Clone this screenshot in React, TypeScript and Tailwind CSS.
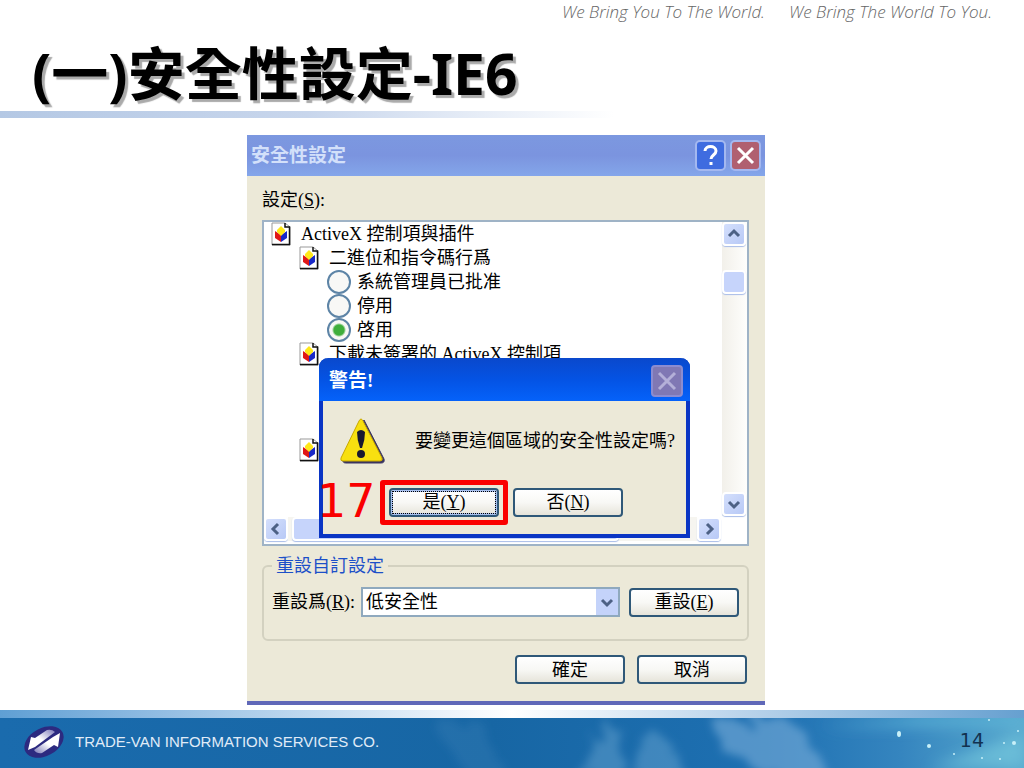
import { useId, type ReactNode } from "react";

const UI_FONT =
  "font-['Liberation_Serif','Noto_Sans_CJK_TC',sans-serif] text-[18px] leading-6 text-black";

export default function App() {
  return (
    <div className="flex min-h-screen flex-col overflow-hidden bg-white">
      <header>
        <p className="flex h-6 items-center justify-end gap-6 pr-8 font-['Open_Sans',sans-serif] text-[17px] font-light text-[#666] italic">
          <span>We Bring You To The World.</span>
          <span>We Bring The World To You.</span>
        </p>
        <h1 className="h-[87px] pt-3 pl-8 font-['Noto_Sans','Noto_Sans_CJK_TC',sans-serif] text-[57px] leading-[74px] font-bold whitespace-nowrap text-black [text-shadow:3px_3px_1px_#aaa]">
          (一)安全性設定-IE6
        </h1>
        <div className="h-[7px] w-3/5 bg-gradient-to-r from-[#b4c8e4] via-[#c8d6ec] to-white" />
      </header>

      <main className="flex flex-1 flex-col items-center pt-[17px]">
        <SettingsDialog />
      </main>

      <Footer />
    </div>
  );
}

function SettingsDialog() {
  return (
    <section
      className={`relative ml-[-12px] flex w-[518px] flex-col border-b-4 border-[#6068b8] bg-[#ece9d8] ${UI_FONT}`}
    >
      <div className="flex h-[41px] items-center justify-between bg-gradient-to-b from-[#7c98e0] via-[#7b94df] to-[#84a6ea] pr-1 pl-1">
        <h2 className="text-[19px] font-bold text-[#d3e0fa]">安全性設定</h2>
        <div className="flex gap-1">
          <TitleButton label="說明" tone="bg-[#3f6ce0]">
            <path d="M9 10c0-6 11-6 11 0c0 4-5 4-5 8M15 21v3" />
          </TitleButton>
          <TitleButton label="關閉" tone="bg-[#b06070]">
            <path d="M7 7l15 15M22 7l-15 15" />
          </TitleButton>
        </div>
      </div>

      <div className="pt-3 pr-4 pl-[15px]">
        <div className="pb-2">
          設定(<u>S</u>):
        </div>
        <SettingsList />
        <ResetGroup />
        <div className="flex justify-end gap-3 pt-[14px] pr-[2px] pb-[17px]">
          <XpButton>確定</XpButton>
          <XpButton>取消</XpButton>
        </div>
      </div>

      <WarningDialog />
    </section>
  );
}

function SettingsList() {
  return (
    <div className="flex h-[326px] flex-col border-2 border-[#9fb3c6] bg-white">
      <div className="flex min-h-0 flex-1">
        <div className="min-w-0 flex-1 overflow-hidden pl-[7px]">
          <Heading level="pl-0">ActiveX 控制項與插件</Heading>
          <Heading level="pl-7">二進位和指令碼行爲</Heading>
          <Choice>系統管理員已批准</Choice>
          <Choice>停用</Choice>
          <Choice checked>啓用</Choice>
          <Heading level="pl-7">下載未簽署的 ActiveX 控制項</Heading>
          <div className="h-[72px]" />
          <Heading level="pl-7" />
        </div>
        <div className="flex w-[25px] flex-col justify-between bg-gradient-to-r from-[#f2f0ea] to-[#fefefc] pr-px">
          <div className="flex flex-col gap-6">
            <ScrollButton label="向上捲動" d="M7 14l5-5l5 5" />
            <div className="h-6 w-6 rounded border-2 border-white bg-[#c6d4fb] shadow-[0_1px_1px_#a8bce8]" />
          </div>
          <ScrollButton label="向下捲動" d="M7 10l5 5l5-5" />
        </div>
      </div>
      <div className="flex h-[28px] items-center pr-[26px] pb-[2px]">
        <ScrollButton label="向左捲動" d="M14 7l-5 5l5 5" />
        <div className="flex flex-1 bg-[#f6f5f0]">
          <div className="ml-1 h-6 w-4/5 rounded border-2 border-white bg-[#c6d4fb] shadow-[0_1px_1px_#a8bce8]" />
        </div>
        <ScrollButton label="向右捲動" d="M10 7l5 5l-5 5" />
      </div>
    </div>
  );
}

function Heading({ level, children }: { level: string; children?: ReactNode }) {
  return (
    <div className={`flex h-6 items-center gap-2.5 whitespace-nowrap ${level}`}>
      <CubeIcon />
      <span>{children}</span>
    </div>
  );
}

function Choice({ checked, children }: { checked?: boolean; children: ReactNode }) {
  return (
    <label className="flex h-6 items-center gap-1.5 pl-14 whitespace-nowrap">
      <input
        type="radio"
        name="binary-behavior"
        defaultChecked={checked}
        className="size-6 appearance-none rounded-full border-2 border-[#5d84a6] bg-[#f8f8f6] checked:bg-[radial-gradient(circle,#3fae3c_0_5px,#f8f8f6_7px)]"
      />
      {children}
    </label>
  );
}

function CubeIcon() {
  return (
    <svg viewBox="0 0 20 24" className="h-6 w-5 shrink-0">
      <path d="M1 1h13l5 4v18H1z" fill="#fff" stroke="#999" />
      <path d="M14 1v4h4.500v17.500H1" fill="none" stroke="#111" strokeWidth="1.500" />
      <path d="M4 9l6 4v7l-6-4z" fill="#e01818" />
      <path d="M16 9l-6 4v7l6-4z" fill="#1828c8" />
      <path d="M10 4l4 4v2l-4 4l-4-4V8z" fill="#ffe818" />
    </svg>
  );
}

function ScrollButton({ label, d }: { label: string; d: string }) {
  return (
    <button
      type="button"
      aria-label={label}
      className="size-6 shrink-0 rounded border-2 border-white bg-gradient-to-br from-[#d4dffc] to-[#b8c9f6] shadow-[0_1px_1px_#a8bce8]"
    >
      <svg viewBox="2 2 20 20" className="size-5" fill="none" stroke="#4d6185" strokeWidth="3">
        <path d={d} />
      </svg>
    </button>
  );
}

function TitleButton({
  label,
  tone,
  children,
}: {
  label: string;
  tone: string;
  children: ReactNode;
}) {
  return (
    <button
      type="button"
      aria-label={label}
      className={`size-[31px] rounded-[5px] border-2 border-[#a4b8f0] ${tone}`}
    >
      <svg viewBox="1 1 27 27" className="size-[27px]" fill="none" stroke="#fff" strokeWidth="3">
        {children}
      </svg>
    </button>
  );
}

function XpButton({ focused, children }: { focused?: boolean; children: ReactNode }) {
  return (
    <button
      type="button"
      className={`h-[29px] w-[110px] rounded-[4px] border-2 border-[#2f5878] bg-gradient-to-b from-white via-[#f8f8f5] to-[#e6e4da] leading-5 ${
        focused
          ? "shadow-[inset_0_0_0_2px_#a8c0ee] outline-1 -outline-offset-4 outline-dotted outline-black"
          : ""
      }`}
    >
      {children}
    </button>
  );
}

function ResetGroup() {
  const id = useId();
  return (
    <fieldset className="mt-2 h-[87px] rounded-[6px] border-2 border-[#d3d1c0] px-2">
      <legend className="px-1 text-[#1c50c8]">重設自訂設定</legend>
      <div className="flex items-center pt-[9px]">
        <label htmlFor={id} className="w-[89px] whitespace-nowrap">
          重設爲(<u>R</u>):
        </label>
        <div className="relative mr-[9px] flex-1">
          <select
            id={id}
            className="block h-[30px] w-full appearance-none border-2 border-[#8fa9be] bg-white pl-[3px] leading-6"
          >
            <option>低安全性</option>
          </select>
          <svg
            viewBox="0 0 22 26"
            className="pointer-events-none absolute top-[2px] right-[2px] h-[26px] w-[22px] bg-[#c4d3fa]"
            fill="none"
            stroke="#4d6185"
            strokeWidth="3"
          >
            <path d="M6 11l5 5l5-5" />
          </svg>
        </div>
        <XpButton>
          重設(<u>E</u>)
        </XpButton>
      </div>
    </fieldset>
  );
}

function WarningDialog() {
  return (
    <div
      role="alertdialog"
      aria-labelledby="warning-title"
      className="absolute top-[223px] left-[72px] w-[371px] rounded-t-[9px] border-4 border-t-0 border-[#0a35c4] bg-[#ece9d8]"
    >
      <div className="-mx-1 flex h-[43px] items-center justify-between rounded-t-[9px] bg-gradient-to-b from-[#0a48cc] via-[#0453e4] to-[#0562fa] pt-[2px] pr-[7px] pl-[10px]">
        <h3 id="warning-title" className="text-[19px] font-bold text-white">
          警告!
        </h3>
        <button
          type="button"
          aria-label="關閉"
          className="size-8 rounded-[4px] border-2 border-[#8c8cd0] bg-[#8078b4]"
        >
          <svg viewBox="0 0 28 28" className="size-7" fill="none" stroke="#b4b0d8" strokeWidth="3">
            <path d="M6 6l16 16M22 6l-16 16" />
          </svg>
        </button>
      </div>
      <div className="flex h-[75px] items-center gap-7 pt-1 pl-4">
        <WarningIcon />
        <p className="whitespace-nowrap">要變更這個區域的安全性設定嗎?</p>
      </div>
      <div className="flex h-[58px] items-center pb-[6px] pl-[57px]">
        <div className="mr-[5px] rounded-[3px] border-[5px] border-[#fa0000] px-1 py-[3px]">
          <XpButton focused>
            是(<u>Y</u>)
          </XpButton>
        </div>
        <XpButton>
          否(<u>N</u>)
        </XpButton>
      </div>
      {/* Step number laid over the dialog's left edge */}
      <span className="absolute bottom-1.5 -left-1.5 font-['DejaVu_Sans',sans-serif] text-[46px] leading-[54px] text-[#fa0000]">
        17
      </span>
    </div>
  );
}

function WarningIcon() {
  return (
    <svg viewBox="0 0 48 48" className="size-12 shrink-0">
      <path
        d="M25 3l20 39q1 4-3 4H7q-4 0-3-4z"
        fill="#3a3560"
        stroke="#3a3560"
        strokeLinejoin="round"
      />
      <path
        d="M20 4q2-4 4 0l19 37q1 3-2 3H4q-3 0-2-3z"
        fill="#f8e010"
        stroke="#c8a800"
        strokeLinejoin="round"
      />
      <path d="M18 15q4-4 8 0q0 8-3 16h-2q-3-8-3-16" fill="#181830" />
      <circle cx="22" cy="37" r="4" fill="#181830" />
    </svg>
  );
}

function Footer() {
  return (
    <footer>
      <div className="h-2 bg-gradient-to-r from-[#5f9fd4] via-white to-[#66a0d0]" />
      <div className="relative flex h-[50px] items-center gap-[11px] overflow-hidden bg-[#1a6aad] px-6 pb-[2px]">
        <Sky />
        <Logo />
        <span className="relative flex-1 font-['Liberation_Sans',sans-serif] text-[15px] text-[#e0ecf8]">
          TRADE-VAN INFORMATION SERVICES CO.
        </span>
        <span className="relative pr-4 pb-1 font-['DejaVu_Sans',sans-serif] text-[19px] text-[#123250]">
          14
        </span>
      </div>
    </footer>
  );
}

function Sky() {
  return (
    <svg viewBox="0 0 1024 50" preserveAspectRatio="none" className="absolute inset-0 size-full">
      <defs>
        <linearGradient id="sky">
          <stop offset="0" stopColor="#1a6bad" />
          <stop offset=".48" stopColor="#1766a4" />
          <stop offset=".75" stopColor="#1e70b2" />
          <stop offset=".88" stopColor="#3585bf" />
          <stop offset="1" stopColor="#58a9ce" />
        </linearGradient>
        <filter id="soft" x="-30%" y="-50%" width="160%" height="200%">
          <feGaussianBlur stdDeviation="7" />
        </filter>
        {/* Ragged cloud edges */}
        <filter id="cloud" x="-30%" y="-50%" width="160%" height="200%">
          <feTurbulence type="fractalNoise" baseFrequency=".04" numOctaves="4" seed="3" />
          <feDisplacementMap in="SourceGraphic" scale="40" />
          <feGaussianBlur stdDeviation="4" />
        </filter>
      </defs>
      <rect width="1024" height="50" fill="url(#sky)" />
      <g fill="#78aed8" filter="url(#cloud)">
        <path d="M710 0h75l25 18l20 40h-60l-50-26z" opacity=".6" />
        <path d="M578 60l20-38l18-17v20l15 35zM636 60V18l12-4l30 18l4 28z" opacity=".4" />
        <path d="M430 4h55l24 56h-40z" opacity=".12" />
      </g>
      <g filter="url(#soft)">
        <path d="M820 8l100-8h104v6z" fill="#63bcdc" />
        <path d="M930 50l94-35v35z" fill="#78cbe0" opacity=".6" />
      </g>
      <g fill="#c8f0f8">
        <ellipse cx="899" cy="16" rx="2" ry="3" />
        <circle cx="929" cy="28" r="2" />
        <circle cx="954" cy="36" r="1" />
        <circle cx="982" cy="40" r="1" />
        <circle cx="989" cy="2" r="1" />
        <circle cx="1004" cy="25" r="1" />
        <circle cx="1014" cy="25" r="2" />
        <circle cx="1000" cy="41" r="1" />
        <circle cx="1018" cy="13" r="1" />
      </g>
    </svg>
  );
}

function Logo() {
  return (
    <svg viewBox="0 0 40 34" className="relative h-[34px] w-10 shrink-0">
      <defs>
        <linearGradient id="arrow-down" x1="0" y1="1" x2="1" y2="0">
          <stop offset=".5" stopColor="#fff" />
          <stop offset="1" stopColor="#7a78b8" />
        </linearGradient>
        <linearGradient id="arrow-up" x1="1" y1="0" x2="0" y2="1">
          <stop offset=".5" stopColor="#fff" />
          <stop offset="1" stopColor="#7a78b8" />
        </linearGradient>
      </defs>
      <ellipse cx="20" cy="17" rx="21" ry="14" transform="rotate(-28 20 17)" fill="#2c2a80" />
      <path d="M7 12l4 1L23 5q5-1 8 2L11 22l-7 3z" fill="url(#arrow-down)" />
      <path d="M36 8l-2 14l-4-2L18 28q-5 1-8-3L29 12z" fill="url(#arrow-up)" />
    </svg>
  );
}
